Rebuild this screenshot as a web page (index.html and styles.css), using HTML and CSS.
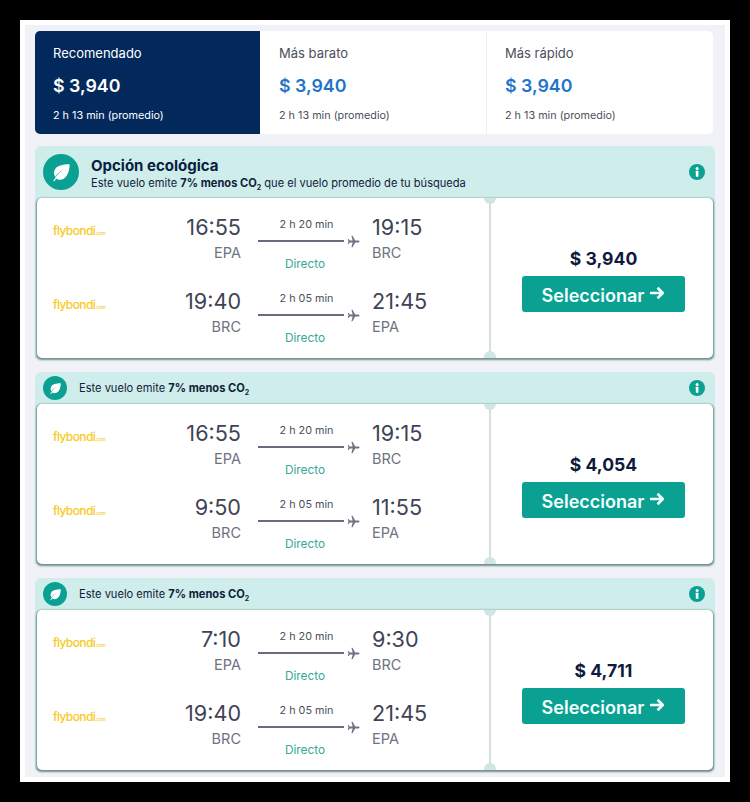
FILE: index.html
```html
<!DOCTYPE html>
<html lang="es">
<head>
<meta charset="utf-8">
<title>Vuelos</title>
<link rel="stylesheet" href="styles.css">
</head>
<body>
<svg class="defs" width="0" height="0" aria-hidden="true">
  <symbol id="leaf" viewBox="0 0 24 24">
    <path fill="#fff" d="M20.5 3.5C13 3.6 7.2 5 5 9c-1.5 2.8-.8 5.6.7 7.6 1-2.6 3.6-5.2 8-7.1-3.4 2.2-6.6 5-8.4 8.6L3.4 20.6l1.3.6 1.7-3c2 1.4 5.2 1.9 8 .2 4.4-2.8 6-9 6.1-14.9z"/>
  </symbol>
  <symbol id="info" viewBox="0 0 16 16">
    <circle cx="8" cy="8" r="8" fill="#0aa192"/>
    <rect x="6.8" y="6.8" width="2.6" height="6" rx=".4" fill="#fff"/>
    <circle cx="8.1" cy="4.4" r="1.5" fill="#fff"/>
  </symbol>
  <symbol id="plane" viewBox="0 0 14 14">
    <path fill="#6f7280" d="M13.6 7c0-.7-.9-1.1-1.9-1.1H8.9L6 .8H4.8l1.4 5.1H3L1.9 4.3H.9L1.6 7 .9 9.7h1L3 8.1h3.2l-1.4 5.1H6l2.9-5.1h2.8c1 0 1.9-.4 1.9-1.1z"/>
  </symbol>
  <symbol id="arrow" viewBox="0 0 16 14">
    <path fill="none" stroke="#f2fffd" stroke-width="2.6" stroke-linejoin="round" d="M1 7h12.5M8.5 1.8 13.8 7l-5.3 5.2"/>
  </symbol>
</svg>
<div class="frame">
  <main class="panel">
    <section class="tabs">
      <div class="tab tab-active">
        <div class="tab-label">Recomendado</div>
        <div class="tab-price">$ 3,940</div>
        <div class="tab-sub">2 h 13 min (promedio)</div>
      </div>
      <div class="tab">
        <div class="tab-label">Más barato</div>
        <div class="tab-price">$ 3,940</div>
        <div class="tab-sub">2 h 13 min (promedio)</div>
      </div>
      <div class="tab tab-last">
        <div class="tab-label">Más rápido</div>
        <div class="tab-price">$ 3,940</div>
        <div class="tab-sub">2 h 13 min (promedio)</div>
      </div>
    </section>

    <article class="offer">
      <header class="eco eco-large">
        <span class="eco-badge eco-badge-large"><svg class="leaf-large"><use href="#leaf"/></svg></span>
        <div class="eco-text">
          <div class="eco-title">Opción ecológica</div>
          <div class="eco-note">Este vuelo emite <b>7% menos CO<sub>2</sub></b> que el vuelo promedio de tu búsqueda</div>
        </div>
        <svg class="info"><use href="#info"/></svg>
      </header>
      <div class="card">
        <div class="legs">
          <div class="leg">
            <div class="logo">flybondi<small>.com</small></div>
            <div class="stop stop-dep"><div class="time">16:55</div><div class="code">EPA</div></div>
            <div class="mid"><div class="dur">2 h 20 min</div><div class="track"><span class="line"></span><svg class="plane"><use href="#plane"/></svg></div><div class="direct">Directo</div></div>
            <div class="stop"><div class="time">19:15</div><div class="code">BRC</div></div>
          </div>
          <div class="leg">
            <div class="logo">flybondi<small>.com</small></div>
            <div class="stop stop-dep"><div class="time">19:40</div><div class="code">BRC</div></div>
            <div class="mid"><div class="dur">2 h 05 min</div><div class="track"><span class="line"></span><svg class="plane"><use href="#plane"/></svg></div><div class="direct">Directo</div></div>
            <div class="stop"><div class="time">21:45</div><div class="code">EPA</div></div>
          </div>
        </div>
        <div class="buy">
          <div class="price">$ 3,940</div>
          <button class="select">Seleccionar <svg class="arrow"><use href="#arrow"/></svg></button>
        </div>
      </div>
    </article>

    <article class="offer">
      <header class="eco">
        <span class="eco-badge"><svg class="leaf"><use href="#leaf"/></svg></span>
        <div class="eco-note">Este vuelo emite <b>7% menos CO<sub>2</sub></b></div>
        <svg class="info"><use href="#info"/></svg>
      </header>
      <div class="card">
        <div class="legs">
          <div class="leg">
            <div class="logo">flybondi<small>.com</small></div>
            <div class="stop stop-dep"><div class="time">16:55</div><div class="code">EPA</div></div>
            <div class="mid"><div class="dur">2 h 20 min</div><div class="track"><span class="line"></span><svg class="plane"><use href="#plane"/></svg></div><div class="direct">Directo</div></div>
            <div class="stop"><div class="time">19:15</div><div class="code">BRC</div></div>
          </div>
          <div class="leg">
            <div class="logo">flybondi<small>.com</small></div>
            <div class="stop stop-dep"><div class="time">9:50</div><div class="code">BRC</div></div>
            <div class="mid"><div class="dur">2 h 05 min</div><div class="track"><span class="line"></span><svg class="plane"><use href="#plane"/></svg></div><div class="direct">Directo</div></div>
            <div class="stop"><div class="time">11:55</div><div class="code">EPA</div></div>
          </div>
        </div>
        <div class="buy">
          <div class="price">$ 4,054</div>
          <button class="select">Seleccionar <svg class="arrow"><use href="#arrow"/></svg></button>
        </div>
      </div>
    </article>

    <article class="offer">
      <header class="eco">
        <span class="eco-badge"><svg class="leaf"><use href="#leaf"/></svg></span>
        <div class="eco-note">Este vuelo emite <b>7% menos CO<sub>2</sub></b></div>
        <svg class="info"><use href="#info"/></svg>
      </header>
      <div class="card">
        <div class="legs">
          <div class="leg">
            <div class="logo">flybondi<small>.com</small></div>
            <div class="stop stop-dep"><div class="time">7:10</div><div class="code">EPA</div></div>
            <div class="mid"><div class="dur">2 h 20 min</div><div class="track"><span class="line"></span><svg class="plane"><use href="#plane"/></svg></div><div class="direct">Directo</div></div>
            <div class="stop"><div class="time">9:30</div><div class="code">BRC</div></div>
          </div>
          <div class="leg">
            <div class="logo">flybondi<small>.com</small></div>
            <div class="stop stop-dep"><div class="time">19:40</div><div class="code">BRC</div></div>
            <div class="mid"><div class="dur">2 h 05 min</div><div class="track"><span class="line"></span><svg class="plane"><use href="#plane"/></svg></div><div class="direct">Directo</div></div>
            <div class="stop"><div class="time">21:45</div><div class="code">EPA</div></div>
          </div>
        </div>
        <div class="buy">
          <div class="price">$ 4,711</div>
          <button class="select">Seleccionar <svg class="arrow"><use href="#arrow"/></svg></button>
        </div>
      </div>
    </article>
  </main>
</div>
</body>
</html>
```
FILE: styles.css
```css
* { box-sizing: border-box; }
html, body { margin: 0; height: 802px; overflow: hidden; }
body {
  background: #000;
  padding: 20px;
  font-family: "Inter", "Liberation Sans", sans-serif;
  color: #0b1b3a;
}
.defs { position: absolute; }
.frame {
  width: 710px;
  height: 762px;
  background: #fff;
  padding: 5px;
}
.panel {
  height: 752px;
  background: #f0f2f7;
  padding: 6px 10px 0;
  overflow: hidden;
}

.tabs {
  display: grid;
  grid-template-columns: 225px 227px 226px;
  width: 678px;
  height: 103px;
  background: #fff;
  border-radius: 5px;
  overflow: hidden;
}
.tab {
  padding: 14px 18px 0 19px;
  color: #4c4f5c;
  border-right: 1px solid #eef0f4;
}
.tab-last { border-right: 0; padding-left: 18px; }
.tab-active { background: #03295c; color: #fff; border-right: 0; padding-left: 18px; }
.tab-label { font-size: 13px; line-height: 17px; }
.tab-price {
  margin-top: 11px;
  font-size: 17.8px;
  line-height: 26px;
  font-weight: 600;
  color: #1f74c8;
}
.tab-active .tab-price { color: #fff; }
.tab-sub { margin-top: 9px; font-size: 10.8px; line-height: 16px; }

.offer {
  margin-top: 14px;
  width: 680px;
  background: #cfedea;
  border-radius: 6px 6px 0 0;
}
.tabs + .offer { margin-top: 12px; }
.eco {
  display: flex;
  align-items: center;
  height: 32px;
  padding: 0 10px 0 8px;
}
.eco-large { height: 52px; }
.eco-badge {
  flex: none;
  width: 24px;
  height: 24px;
  border-radius: 50%;
  background: #0aa192;
  display: flex;
  align-items: center;
  justify-content: center;
  margin-right: 12px;
}
.eco-badge-large {
  width: 36px;
  height: 36px;
  margin-right: 12px;
}
.leaf { width: 15px; height: 15px; }
.leaf-large { width: 23px; height: 23px; }
.eco-text { flex: 1; padding-top: 3px; }
.eco-title {
  font-size: 15px;
  line-height: 18px;
  font-weight: 700;
  color: #08203f;
  margin-bottom: 1px;
}
.eco-note {
  flex: 1;
  font-size: 11.1px;
  line-height: 14px;
  color: #10213b;
}
.eco-note b { font-weight: 700; }
.eco-note sub { font-size: 7px; line-height: 0; }
.info { flex: none; width: 16px; height: 16px; }

.card {
  display: flex;
  width: 676px;
  height: 160px;
  margin: 0 2px;
  background: #fff;
  border-radius: 5px;
  box-shadow: 0 1px 2px 0.5px rgba(60, 100, 100, .7);
}
.legs {
  position: relative;
  width: 454px;
  padding: 16px 0 0 16px;
  border-right: 2px solid #d5dfe0;
}
.legs::before, .legs::after {
  content: "";
  position: absolute;
  right: -7px;
  width: 12px;
  height: 6px;
  background: #cfe6e3;
}
.legs::before { top: 0; border-radius: 0 0 6px 6px; }
.legs::after { bottom: 0; height: 7px; border-radius: 6px 6px 0 0; }
.leg {
  display: grid;
  grid-template-columns: 70px 118px 119px 1fr;
  height: 74px;
}
.logo {
  padding-top: 9px;
  font-size: 12px;
  line-height: 16px;
  font-weight: 500;
  letter-spacing: -.6px;
  color: #f7ca1e;
}
.logo small { font-size: 4.5px; letter-spacing: 0; }
.stop { padding-left: 12px; }
.stop-dep { padding-left: 0; text-align: right; }
.time { font-size: 21.6px; line-height: 26px; color: #3f4355; }
.code { margin-top: 3px; font-size: 14.5px; line-height: 20px; color: #6f7280; }
.mid { margin-left: 17px; width: 102px; padding-top: 3px; }
.dur { width: 97px; text-align: center; font-size: 10.8px; line-height: 16px; color: #4c4f5c; }
.track { display: flex; align-items: center; height: 14px; margin-top: 1px; }
.line { width: 87px; height: 2px; background: #6a6c7a; }
.plane { width: 13px; height: 13px; margin-left: 3px; }
.direct { width: 94px; margin-top: 8px; text-align: center; font-size: 11.8px; line-height: 16px; color: #35a899; }

.buy {
  flex: 1;
  display: flex;
  flex-direction: column;
  align-items: center;
  padding: 48px 0 0 3px;
}
.price {
  font-size: 17.6px;
  line-height: 26px;
  font-weight: 700;
  color: #0f1a3c;
}
.select {
  display: flex;
  align-items: center;
  justify-content: center;
  gap: 5px;
  width: 163px;
  height: 36px;
  margin-top: 4px;
  border: 0;
  border-radius: 3px;
  background: #0aa192;
  color: #f2fffd;
  font-family: inherit;
  font-size: 18px;
  font-weight: 600;
  padding: 2px 0 0;
}
.arrow { width: 16px; height: 14px; margin-top: -4px; }
```
